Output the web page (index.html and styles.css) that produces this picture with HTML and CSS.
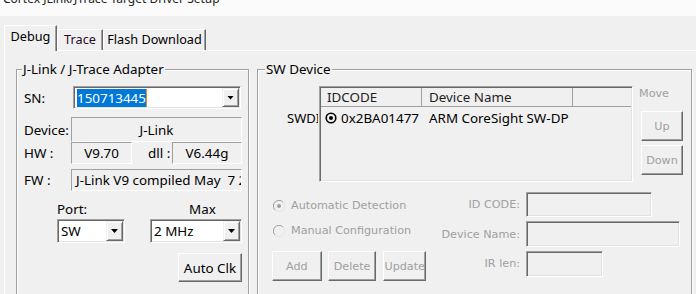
FILE: index.html
```html
<!DOCTYPE html>
<html>
	<head>
		<meta charset="UTF-8">
		<title>Cortex JLink/JTrace Target Driver Setup</title>
		<link rel="stylesheet" href="styles.css">
	</head>
	<body>
		<div class="title"><div class="title-text">Cortex JLink/JTrace Target Driver Setup</div></div>
		<div class="tabs">
			<div class="tab tab-debug on">Debug</div>
			<div class="tab tab-trace">Trace</div>
			<div class="tab tab-flash">Flash Download</div>
		</div>
		<div class="panel">
			<fieldset class="group adapter">
				<legend>J-Link / J-Trace Adapter</legend>
				<div class="row row-sn">
					<span class="lbl">SN:</span>
					<div class="combo sn">
						<span class="val"><span class="sel">150713445</span></span>
						<span class="drop"></span>
					</div>
				</div>
				<div class="row row-dev">
					<span class="lbl">Device:</span>
					<div class="field dev">J-Link</div>
				</div>
				<div class="row row-hw">
					<span class="lbl">HW :</span>
					<div class="field hw">V9.70</div>
					<span class="lbl-dll">dll :</span>
					<div class="field dll">V6.44g</div>
				</div>
				<div class="row row-fw">
					<span class="lbl">FW :</span>
					<div class="field fw">J-Link V9 compiled May  7 2021 10:27:02</div>
				</div>
				<div class="port">
					<span class="port-lbl">Port:</span>
					<span class="max-lbl">Max</span>
					<div class="combo"><span class="val">SW</span><span class="drop"></span></div>
					<div class="combo"><span class="val">2 MHz</span><span class="drop"></span></div>
					<button class="btn auto">Auto Clk</button>
				</div>
			</fieldset>
			<fieldset class="group swdev">
				<legend>SW Device</legend>
				<div class="sw-top">
					<span class="swdio">SWDIO</span>
					<div class="list">
						<div class="list-head">
							<span class="col c1">IDCODE</span>
							<span class="col c2">Device Name</span>
							<span class="c3"></span>
						</div>
						<div class="list-row">
							<span class="c1">
								<svg width="12" height="12" viewBox="0 0 12 12"><circle cx="6" cy="6" r="4.8" fill="none" stroke="#000" stroke-width="1.6"/><circle cx="6" cy="6" r="2" fill="#000"/></svg>
								0x2BA01477
							</span>
							<span class="c2">ARM CoreSight SW-DP</span>
						</div>
					</div>
					<div class="move">
						<span class="move-lbl off">Move</span>
						<button class="btn off up">Up</button>
						<button class="btn off down">Down</button>
					</div>
				</div>
				<div class="sw-bottom">
					<label class="radio off r1">
						<svg width="12" height="12" viewBox="0 0 12 12"><path d="M10 2A5.5 5.5 0 0 0 2 10" fill="none" stroke="#a0a0a0"/><path d="M2 10A5.5 5.5 0 0 0 10 2" fill="none" stroke="#e3e3e3"/><circle cx="6" cy="6" r="2" fill="#a0a0a0"/></svg>
						Automatic Detection
					</label>
					<span class="flbl off">ID CODE:</span>
					<div class="edit e1"></div>
					<label class="radio off r2">
						<svg width="12" height="12" viewBox="0 0 12 12"><path d="M10 2A5.5 5.5 0 0 0 2 10" fill="none" stroke="#a0a0a0"/><path d="M2 10A5.5 5.5 0 0 0 10 2" fill="none" stroke="#e3e3e3"/></svg>
						Manual Configuration
					</label>
					<span class="flbl off">Device Name:</span>
					<div class="edit e2"></div>
					<div class="btns">
						<button class="btn off b-add">Add</button>
						<button class="btn off b-del">Delete</button>
						<button class="btn off b-upd">Update</button>
					</div>
					<span class="flbl off l3">IR len:</span>
					<div class="edit e3"></div>
				</div>
			</fieldset>
		</div>
	</body>
</html>
```
FILE: styles.css
```css
*{
	margin:0;
	padding:0;
	box-sizing:border-box;
}
body{
	width:696px;
	height:294px;
	overflow:hidden;
	background:#f0f0f0;
	font-family:"Noto Sans","Open Sans",sans-serif;
	font-size:13.4px;
	color:#000;
}
.off{
	color:#a0a0a0;
	font-family:"DejaVu Sans",sans-serif;
	font-size:11.2px;
}

/* title */
.title{
	height:16px;
	background:#fbfbfb;
	overflow:hidden;
	padding-left:3px;
	font-size:12px;
}
.title-text{
	line-height:16px;
	margin-top:-9px;
	color:#222;
}

/* tabs */
.tabs{
	display:flex;
	align-items:flex-end;
	height:34px;
	padding-left:4px;
	font-size:12.7px;
}
.tab{
	height:21px;
	line-height:18px;
	text-align:center;
	border:1px solid #fff;
	border-bottom:0;
	border-right-color:#696969;
	box-shadow:inset -1px 0 0 #a0a0a0;
}
.tab.on{
	height:26px;
	line-height:21px;
	margin-bottom:-1px;
	background:#f0f0f0;
	position:relative;
	z-index:1;
}
.tab-debug{width:53px;}
.tab-trace{width:46px;color:#2a0a2a;}
.tab-flash{width:103px;}

.panel{
	display:flex;
	gap:8px;
	margin-left:4px;
	height:244px;
	border-top:1px solid #fff;
	border-left:1px solid #fff;
	padding:10px 0 0 11px;
	overflow:hidden;
}

/* group boxes */
.group{
	border:1px solid #a0a0a0;
	box-shadow:inset 1px 1px 0 #fff,1px 1px 0 #fff;
	height:250px;
	min-width:0;
}
.group legend{
	line-height:16px;
	padding:0 1px;
	background:#f0f0f0;
}
.adapter{
	width:233px;
	padding:9px 6px 0 7px;
}
.adapter legend{margin-left:-2px;}
.swdev{
	width:435px;
	padding:9px 7px 0 14px;
}
.swdev legend{margin-left:-7px;}

/* adapter rows */
.row{
	display:flex;
	align-items:center;
}
.lbl{width:47px;}
.row-sn{height:23px;}
.row-dev{height:25px;margin-top:8px;}
.row-hw{height:22px;}
.row-fw{height:22px;margin-top:5px;}
.field{
	height:100%;
	border:1px solid;
	border-color:#a0a0a0 #fff #fff #a0a0a0;
	text-align:center;
	display:flex;
	align-items:center;
	justify-content:center;
}
.dev,.fw{width:171px;}
.hw{width:61px;}
.dll{width:70px;}
.lbl-dll{width:40px;padding-left:16px;}
.fw{
	justify-content:flex-start;
	padding-left:4px;
	white-space:pre;
	overflow:hidden;
}

.combo{
	display:flex;
	background:#fff;
	border:1px solid;
	border-color:#a0a0a0 #fff #fff #a0a0a0;
	box-shadow:inset 1px 1px 0 #696969,inset -1px -1px 0 #e3e3e3;
	padding:1px;
}
.combo .val{
	flex:1;
	padding-left:2px;
	display:flex;
	align-items:center;
}
.combo .drop{
	width:17px;
	background:#f0f0f0;
	border:1px solid;
	border-color:#f0f0f0 #696969 #696969 #f0f0f0;
	box-shadow:inset 1px 1px 0 #fff,inset -1px -1px 0 #a0a0a0;
	display:flex;
	align-items:center;
	justify-content:center;
}
.combo .drop::after{
	content:"";
	width:7px;
	height:4px;
	background:#000;
	clip-path:polygon(0 0,100% 0,50% 100%);
}
.sn{
	width:168px;
	height:23px;
	margin-left:2px;
}
.sel{
	background:#0078d7;
	color:#fff;
	line-height:18px;
	border-right:1px solid #e88a2a;
}

.port{
	display:grid;
	grid-template-columns:68px 92px;
	column-gap:25px;
	margin:10px 0 0 33px;
}
.port-lbl,.max-lbl{line-height:17px;}
.max-lbl{padding-left:39px;}
.port .combo{
	height:24px;
	margin-top:1px;
}

.btn{
	background:#f0f0f0;
	border:1px solid;
	border-color:#fff #696969 #696969 #fff;
	box-shadow:inset -1px -1px 0 #a0a0a0;
	font-family:inherit;
	font-size:13.4px;
	color:#000;
}
.btn.off{
	color:#a0a0a0;
	font-family:"DejaVu Sans",sans-serif;
	font-size:11.2px;
}
.auto{
	grid-column:2;
	justify-self:end;
	width:64px;
	height:29px;
	margin-top:10px;
}

/* sw device */
.sw-top{
	display:flex;
	height:96px;
}
.swdio{
	width:46px;
	margin-right:1px;
	padding-left:15px;
	margin-top:24px;
	line-height:17px;
	height:17px;
	font-size:13px;
	overflow:hidden;
	white-space:nowrap;
}
.list{
	width:314px;
	background:#f0f0f0;
	border:1px solid;
	border-color:#a0a0a0 #fff #fff #a0a0a0;
	box-shadow:inset 1px 1px 0 #696969,inset -1px -1px 0 #e3e3e3;
	padding:1px;
}
.list-head{
	display:flex;
	height:19px;
	border-bottom:1px solid #a0a0a0;
	color:#1e1e1e;
}
.col{
	border-right:1px solid #a0a0a0;
	line-height:18px;
}
.c1{width:101px;padding-left:6px;}
.c2{width:151px;padding-left:7px;}
.c3{flex:1;}
.list-row{
	display:flex;
	height:20px;
	margin-top:1px;
	align-items:center;
}
.list-row .c1{
	padding-left:4px;
	display:flex;
	align-items:center;
	gap:4px;
}
.move{
	display:flex;
	flex-direction:column;
	width:42px;
	margin-left:8px;
}
.move-lbl{
	line-height:16px;
	margin-left:-2px;
}
.up,.down{height:30px;}
.up{margin-top:9px;}
.down{margin-top:4px;}

.sw-bottom{
	display:grid;
	grid-template-columns:154px 88px auto;
	grid-template-rows:25px 26px 30px;
	column-gap:6px;
	row-gap:4px;
	margin-top:10px;
}
.radio{
	display:flex;
	align-items:center;
	gap:6px;
	line-height:16px;
	height:16px;
	padding-left:1px;
}
.r1{margin-top:6px;}
.r2{margin-top:2px;}
.flbl{
	text-align:right;
	align-self:center;
	white-space:nowrap;
}
.l3{
	align-self:start;
	line-height:26px;
}
.edit{
	align-self:start;
	border:1px solid;
	border-color:#a0a0a0 #fff #fff #a0a0a0;
	box-shadow:inset 1px 1px 0 #696969,inset -1px -1px 0 #e3e3e3;
}
.e1{width:126px;height:25px;}
.e2{width:154px;height:26px;}
.e3{width:77px;height:26px;}
.btns{display:flex;}
.btns .btn{height:30px;}
.b-add{width:57px;}
.b-del{width:56px;margin-left:6px;}
.b-upd{width:48px;margin-left:7px;}
```
